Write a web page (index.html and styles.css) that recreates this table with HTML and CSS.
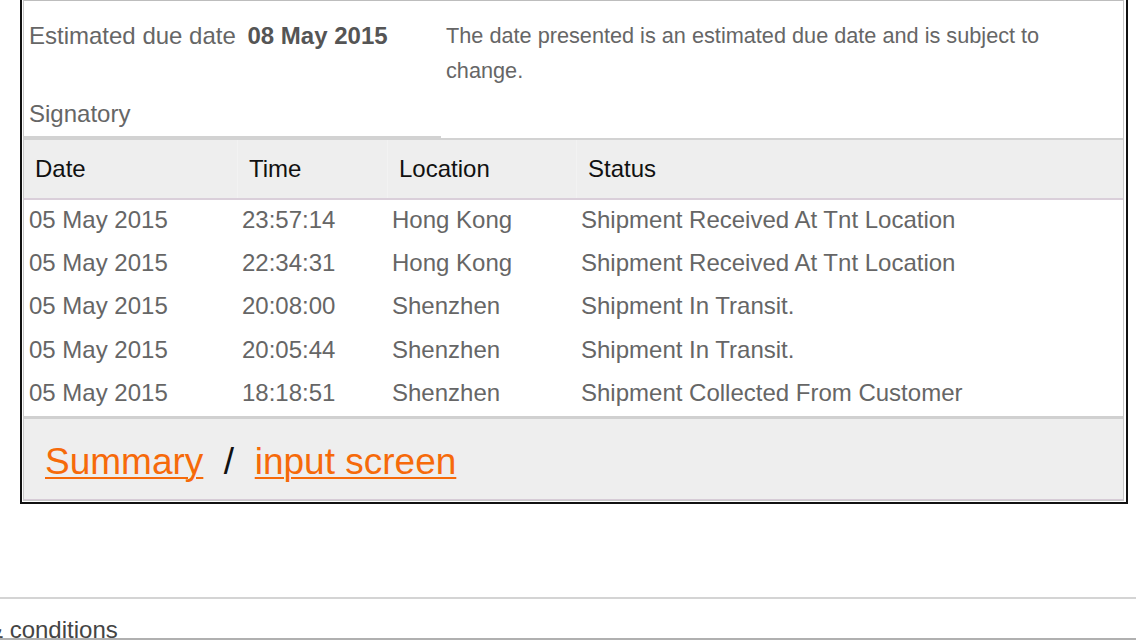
FILE: index.html
```html
<!DOCTYPE html>
<html lang="en">
<head>
<meta charset="utf-8">
<title>Shipment tracking</title>
<link rel="stylesheet" href="styles.css">
</head>
<body>
  <div class="panel">
    <div class="inner">
      <div class="summary">
        <div class="cell due">Estimated due date <b class="due-date">08 May 2015</b></div>
        <div class="cell note">The date presented is an estimated due date and is subject to change.</div>
        <div class="cell sign">Signatory</div>
        <div class="cell blank"></div>
      </div>
      <div class="events">
        <div class="row head">
          <div class="hc">Date</div>
          <div class="hc sep">Time</div>
          <div class="hc sep">Location</div>
          <div class="hc sep">Status</div>
        </div>
        <div class="row">
          <div class="dc">05 May 2015</div><div class="dc">23:57:14</div><div class="dc">Hong Kong</div><div class="dc">Shipment Received At Tnt Location</div>
        </div>
        <div class="row">
          <div class="dc">05 May 2015</div><div class="dc">22:34:31</div><div class="dc">Hong Kong</div><div class="dc">Shipment Received At Tnt Location</div>
        </div>
        <div class="row">
          <div class="dc">05 May 2015</div><div class="dc">20:08:00</div><div class="dc">Shenzhen</div><div class="dc">Shipment In Transit.</div>
        </div>
        <div class="row">
          <div class="dc">05 May 2015</div><div class="dc">20:05:44</div><div class="dc">Shenzhen</div><div class="dc">Shipment In Transit.</div>
        </div>
        <div class="row">
          <div class="dc">05 May 2015</div><div class="dc">18:18:51</div><div class="dc">Shenzhen</div><div class="dc">Shipment Collected From Customer</div>
        </div>
      </div>
      <div class="nav">
        <a href="#" class="link">Summary</a>&nbsp; /&nbsp; <a href="#" class="link">input screen</a>
      </div>
    </div>
  </div>
  <div class="site-footer">
    <span class="terms">&amp; conditions</span>
  </div>
</body>
</html>
```
FILE: styles.css
```css
html, body {
  margin: 0;
  padding: 0;
  background: #fff;
}
body {
  font-family: "Liberation Sans", Arial, Helvetica, sans-serif;
  font-size: 24px;
  color: #666;
  width: 1136px;
  height: 640px;
  overflow: hidden;
}
.panel {
  margin-left: 20px;
  width: 1108px;
  box-sizing: border-box;
  border: 2px solid #111;
  border-top: 0;
  padding: 0 2px 1px 1px;
}
.inner {
  border: 1px solid #c8c8c8;
  border-top: 1px solid #bdbdbd;
}
.summary {
  display: grid;
  grid-template-columns: 417px 1fr;
}
.cell {
  line-height: 35px;
}
.due {
  padding: 17px 0 8px 5px;
  white-space: nowrap;
}
.due-date {
  color: #555;
  font-weight: bold;
  margin-left: 5px;
}
.note {
  padding: 17px 60px 8px 5px;
  font-size: 21.7px;
}
.sign {
  padding: 0 0 5px 5px;
  border-bottom: 2px solid #d2d2d2;
}
.events {
  border-top: 2px solid #d2d2d2;
}
.row {
  display: grid;
  grid-template-columns: 213px 150px 189px 1fr;
}
.head {
  background: #eeeeee;
  border-bottom: 2px solid #dacfda;
  color: #111;
  line-height: 58px;
}
.hc {
  padding-left: 11px;
}
.hc.sep {
  border-left: 1px solid #f2f2f2;
  padding-left: 11px;
}
.dc {
  padding: 0 0 3px 5px;
  line-height: 40.2px;
  white-space: nowrap;
}
.nav {
  background: #eeeeee;
  border-top: 3px solid #d0d0d0;
  border-bottom: 1px solid #d6cbd6;
  padding: 6px 0 0 21px;
  height: 74px;
  line-height: 74px;
  font-size: 37px;
  color: #111;
}
.link {
  color: #f66a0a;
  text-decoration: underline;
  text-decoration-thickness: 2px;
  text-underline-offset: 3px;
}
.site-footer {
  margin-top: 93px;
  border-top: 2px solid #d4d4d4;
  border-bottom: 2px solid #b0b0b0;
  height: 39px;
  color: #444;
  line-height: 24px;
}
.terms {
  display: block;
  padding-top: 19px;
  margin-left: -13px;
  white-space: nowrap;
}
```
